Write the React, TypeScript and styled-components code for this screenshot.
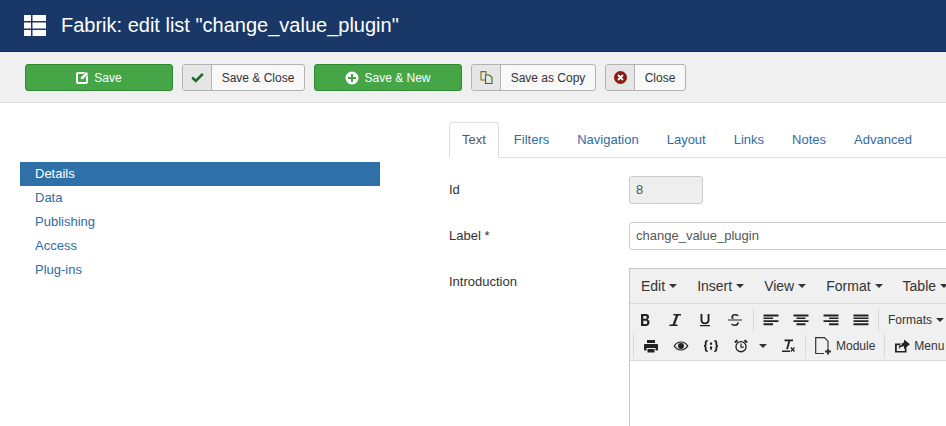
import React from 'react';
import styled, { createGlobalStyle } from 'styled-components';

const GlobalStyle = createGlobalStyle`
  html, body {
    margin: 0;
    height: 426px;
    overflow: hidden;
    background: #ffffff;
  }
  body {
    font-family: 'Liberation Sans', Arial, sans-serif;
    font-size: 13px;
    color: #333333;
  }
  * {
    box-sizing: border-box;
  }
`;

const Page = styled.div`
  width: 946px;
  height: 426px;
  overflow: hidden;
`;

const Header = styled.header`
  display: flex;
  align-items: center;
  gap: 15px;
  height: 52px;
  padding: 0 0 0 24px;
  background: #1a3867;
  border-bottom: 1px solid #0f2a58;
`;

const HeaderTitle = styled.h1`
  margin: 0;
  font-size: 20px;
  font-weight: 400;
  color: #ffffff;
`;

const Toolbar = styled.div`
  display: flex;
  gap: 9px;
  height: 51px;
  padding: 12px 25px 0;
  background: #f0f0f0;
  border-bottom: 1px solid #dddddd;
`;

const GreenButton = styled.button`
  display: flex;
  align-items: center;
  justify-content: center;
  gap: 5px;
  width: 148px;
  height: 27px;
  padding: 0;
  font-family: inherit;
  font-size: 12px;
  color: #ffffff;
  background: #46a546;
  border: 1px solid #2f8a2f;
  border-radius: 3px;
`;

const PlainButton = styled.button`
  display: flex;
  align-items: stretch;
  height: 27px;
  padding: 0;
  font-family: inherit;
  font-size: 12px;
  color: #333333;
  background: #f8f8f8;
  border: 1px solid #b3b3b3;
  border-radius: 3px;
  overflow: hidden;
`;

const ButtonIcon = styled.span`
  display: flex;
  align-items: center;
  justify-content: center;
  width: 29px;
  background: #e6e6e6;
  border-right: 1px solid #b3b3b3;
`;

const ButtonLabel = styled.span<{ $width: number }>`
  display: flex;
  align-items: center;
  justify-content: center;
  width: ${(props) => props.$width}px;
`;

const Content = styled.div`
  display: flex;
  padding: 19px 0 0 20px;
`;

const Sidebar = styled.nav`
  display: flex;
  flex-direction: column;
  width: 360px;
  margin: 40px 69px 0 0;
  flex-shrink: 0;
`;

const SideItem = styled.a<{ $active?: boolean }>`
  height: 24px;
  padding-left: 15px;
  line-height: 23px;
  font-size: 13px;
  color: ${(props) => (props.$active ? '#ffffff' : '#2f6ca8')};
  background: ${(props) => (props.$active ? '#2f70a9' : 'transparent')};
`;

const Main = styled.main`
  flex: 1;
  min-width: 0;
`;

const Tabs = styled.div`
  display: flex;
  height: 36px;
  border-bottom: 1px solid #dddddd;
`;

const Tab = styled.a<{ $active?: boolean }>`
  height: 36px;
  padding: 9px ${(props) => (props.$active ? '12px' : '13px')} 0;
  margin-right: ${(props) => (props.$active ? '1px' : '0')};
  font-size: 13px;
  color: ${(props) => (props.$active ? '#555555' : '#2f6ca8')};
  background: ${(props) => (props.$active ? '#ffffff' : 'transparent')};
  border: 1px solid ${(props) => (props.$active ? '#dddddd' : 'transparent')};
  border-bottom-color: ${(props) => (props.$active ? '#ffffff' : 'transparent')};
  border-radius: 4px 4px 0 0;
`;

const Row = styled.div`
  display: flex;
  margin-top: 18px;
`;

const FieldLabel = styled.label`
  width: 180px;
  flex-shrink: 0;
  padding-top: 6px;
  font-size: 13px;
  color: #333333;
`;

const TextInput = styled.div<{ $readonly?: boolean }>`
  width: ${(props) => (props.$readonly ? '74px' : '340px')};
  height: 28px;
  padding: 0 6px;
  line-height: 26px;
  font-size: 13px;
  color: #555555;
  background: ${(props) => (props.$readonly ? '#eeeeee' : '#ffffff')};
  border: 1px solid #cccccc;
  border-radius: 3px;
  flex-shrink: 0;
`;

const Editor = styled.div`
  width: 340px;
  height: 180px;
  flex-shrink: 0;
  border: 1px solid #c5c5c5;
  background: #ffffff;
`;

const MenuBar = styled.div`
  display: flex;
  align-items: center;
  gap: 20px;
  height: 35px;
  padding-left: 11px;
  background: #f0f0f0;
  border-bottom: 1px solid #d9d9d9;
  white-space: nowrap;
`;

const MenuItem = styled.span`
  display: inline-flex;
  align-items: center;
  gap: 4px;
  font-size: 14px;
  color: #333333;
`;

const Caret = styled.i<{ $margin?: string }>`
  width: 0;
  height: 0;
  margin: ${(props) => props.$margin || '0'};
  border-left: 4px solid transparent;
  border-right: 4px solid transparent;
  border-top: 4px solid #333333;
  flex-shrink: 0;
`;

const IconRows = styled.div`
  display: flex;
  flex-direction: column;
  gap: 2px;
  height: 57px;
  padding-top: 4px;
  background: #f0f0f0;
  border-bottom: 1px solid #d9d9d9;
  overflow: hidden;
`;

const IconRow = styled.div<{ $indent: number }>`
  display: flex;
  align-items: center;
  height: 24px;
  padding-left: ${(props) => props.$indent}px;
  white-space: nowrap;
`;

const ToolIcon = styled.span`
  display: flex;
  align-items: center;
  justify-content: center;
  width: 30px;
  height: 24px;
  flex-shrink: 0;
`;

const ToolSep = styled.span<{ $left?: number; $right?: number }>`
  width: 1px;
  height: 24px;
  margin: 0 ${(props) => props.$right ?? 2}px 0 ${(props) => props.$left ?? 2}px;
  background: #d9d9d9;
  flex-shrink: 0;
`;

const ToolText = styled.span<{ $right?: number }>`
  display: inline-flex;
  align-items: center;
  gap: 4px;
  padding: 0 ${(props) => props.$right ?? 7}px 0 7px;
  font-size: 12px;
  color: #333333;
  flex-shrink: 0;
`;

const Glyph = ({ d, size = 16 }: { d: string; size?: number }) => (
  <svg width={size} height={size} viewBox="0 0 16 16" fill="#222222" fillRule="evenodd">
    <path d={d} />
  </svg>
);

const ICONS: Record<string, string> = {
  bold: 'M4 2h4.800C11 2 12 3.300 12 5c0 1.200-.6 2.100-1.500 2.500 1.200.4 2 1.400 2 2.800 0 2.200-1.500 3.700-3.700 3.700H4V2zm2.300 2v2.800h2c.9 0 1.400-.6 1.400-1.400S9.200 4 8.300 4h-2zm0 4.800V12h2.400c1 0 1.500-.7 1.500-1.600s-.5-1.600-1.500-1.600H6.300z',
  italic: 'M6.500 2H14v1.600h-2.700L8 12.400h2.500V14H2.500v-1.600h3.100l3.300-8.800H6.500V2z',
  underline: 'M3.500 2h1.900v5.800c0 1.700.9 2.700 2.600 2.700s2.600-1 2.600-2.700V2h1.900v5.900c0 2.800-1.800 4.300-4.500 4.300S3.500 10.700 3.500 7.900V2zM3 13h10v1.300H3V13z',
  strike: 'M1 7.500h14v1.100H1V7.500zM4.900 6.700C4.500 6.200 4.300 5.600 4.300 5c0-1.900 1.600-3 3.800-3 1.400 0 2.600.4 3.500 1l-.7 1.300C10.100 3.700 9.200 3.400 8.100 3.400 6.900 3.400 6 4 6 5c0 .7.400 1.200 1.400 1.700H4.900zM11.500 9.400c.2.400.3.800.3 1.300 0 2-1.600 3.300-4 3.300-1.500 0-2.800-.5-3.700-1.200l.8-1.300c.8.600 1.800 1 2.900 1 1.300 0 2.200-.7 2.200-1.700 0-.2 0-.3-.1-.4h1.600z',
  alignLeft: 'M.5 2.500h15v2H.5v-2zm0 3h9.500v1.500H.5V5.500zm0 2.800h15v1.700H.5V8.300zm0 3h9.500v2H.5v-2z',
  alignCenter: 'M.5 2.500h15v2H.5v-2zm3 3h9v1.500h-9V5.500zm-3 2.800h15v1.700H.5V8.300zm3 3h9v2h-9v-2z',
  alignRight: 'M.5 2.500h15v2H.5v-2zm5.500 3h9.500v1.500H6V5.500zM.5 8.300h15v1.700H.5V8.300zm5.500 3h9.500v2H6v-2z',
  justify: 'M.5 2.500h15v2H.5v-2zm0 3h15v1.500H.5V5.500zm0 2.800h15v1.700H.5V8.300zm0 3h15v2H.5v-2z',
  print: 'M4 2h8v3H4V2zM2 6h12c.6 0 1 .4 1 1v4.500c0 .5-.4 1-1 1h-1.500V10h-9v2.500H2c-.6 0-1-.5-1-1V7c0-.6.4-1 1-1zm2.500 5h7v3.500h-7V11z',
  eye: 'M8 3.500c3.300 0 6 1.900 7.500 4.500-1.500 2.600-4.200 4.500-7.500 4.500S2 10.600.5 8C2 5.400 4.700 3.500 8 3.500zm0 1.100C5.400 4.600 3.300 6 2 8c1.300 2 3.400 3.400 6 3.400S12.700 10 14 8c-1.300-2-3.400-3.400-6-3.400zM8 5a3 3 0 1 1 0 6 3 3 0 0 1 0-6z',
  code: 'M4.800 2v1.500c-.9 0-1.200.4-1.200 1.200v1.800c0 .8-.4 1.300-1 1.500.6.200 1 .7 1 1.500v1.800c0 .8.300 1.200 1.200 1.200V14c-2 0-3-.8-3-2.500V9.700c0-.7-.3-1-.8-1V7.300c.5 0 .8-.3.8-1V4.500C1.800 2.800 2.800 2 4.800 2zm6.400 0c2 0 3 .8 3 2.500v1.800c0 .7.300 1 .8 1v1.400c-.5 0-.8.3-.8 1v1.800c0 1.700-1 2.500-3 2.500v-1.500c.9 0 1.200-.4 1.200-1.200V9.500c0-.8.400-1.300 1-1.500-.6-.2-1-.7-1-1.500V4.700c0-.8-.3-1.200-1.200-1.200V2zM6.900 4.500h2.200v2.200H6.900V4.500zm0 4h2.200v1.800c0 1-.5 1.700-1.400 2l-.5-.8c.4-.2.600-.5.600-.8h-.9V8.500z',
  clock: 'M8 3a5.700 5.700 0 1 1 0 11.400A5.700 5.700 0 0 1 8 3zm0 1.300a4.400 4.400 0 1 0 0 8.800 4.400 4.400 0 0 0 0-8.800zM7.400 5.500h1.200v3.100h2.200v1.200H7.400V5.500zM3.700 1.500L5.200 3 2.600 5.200 1.200 3.700zM12.300 1.500l2.500 2.200-1.400 1.500L10.800 3z',
  clear: 'M4.500 1.500H13v1.700h-2.800L8 11.200H6.100l2.200-8H4.500V1.500zM2 12.500h8v1.500H2v-1.500zM11.300 9l1.400 1.500L14.100 9l.9.800-1.400 1.600 1.400 1.600-.9.900-1.400-1.500-1.400 1.500-.9-.9 1.400-1.600-1.400-1.600z',
  menu: 'M1 5.500h7.500L7 7.300H2.800v5.700h8v-2.500l1.700-1.500v5.500H1V5.500zM10 1.500l6 4.700-6 4.800V8.200c-2.500 0-4.200.9-5.300 3 .2-3.700 2.300-6.200 5.300-6.600V1.500z',
};

const SaveIcon = () => (
  <svg width="13" height="13" viewBox="0 0 13 13">
    <rect x="1" y="2" width="10" height="10" rx="1" fill="none" stroke="#ffffff" strokeWidth="2" />
    <path d="M4.500 6.200L10.300.8l2.200 2.200L7 8.500H4.500z" fill="#ffffff" stroke="#46a546" strokeWidth="0.800" />
  </svg>
);

const PlusCircleIcon = () => (
  <svg width="14" height="14" viewBox="0 0 14 14">
    <circle cx="7" cy="7" r="6.500" fill="#ffffff" />
    <path d="M6 3h2v3h3v2H8v3H6V8H3V6h3z" fill="#46a546" />
  </svg>
);

const CheckIcon = () => (
  <svg width="13" height="11" viewBox="0 0 13 11" fill="none">
    <path d="M1.200 5.500L4.800 9 11.800 1.800" stroke="#1f6b2a" strokeWidth="2.600" />
  </svg>
);

const CopyIcon = () => (
  <svg width="13" height="13" viewBox="0 0 13 13" fill="none" strokeWidth="1.100">
    <path d="M1 .6h5v8.400H1z" stroke="#8a6d00" />
    <path d="M5.500 4h4l2.500 2.500v6H5.500z" fill="#e6e6e6" stroke="#1f7a1f" />
  </svg>
);

const CloseIcon = () => (
  <svg width="13" height="13" viewBox="0 0 13 13">
    <circle cx="6.500" cy="6.500" r="6.500" fill="#8f1a14" />
    <path d="M4 4l5 5M9 4l-5 5" stroke="#ffffff" strokeWidth="1.800" />
  </svg>
);

const ListIcon = () => (
  <svg width="22" height="21" viewBox="0 0 22 21" fill="#ffffff">
    <path d="M0 0h7v6H0zM8.500 0H22v6H8.500zM0 7.500h7v6H0zM8.500 7.500H22v6H8.500zM0 15h7v6H0zM8.500 15H22v6H8.500z" />
  </svg>
);

const ModuleIcon = () => (
  <svg width="17" height="18" viewBox="0 0 17 18" fill="none">
    <path d="M9 16.500H.7V.7h8.800l3.500 3.500v6.800" stroke="#333333" strokeWidth="1.200" />
    <path d="M13 11.500v6M10 14.500h6" stroke="#333333" strokeWidth="2" />
  </svg>
);

const menus = ['Edit', 'Insert', 'View', 'Format', 'Table'];

const App: React.FC = () => {
  return (
    <Page>
      <GlobalStyle />
      <Header>
        <ListIcon />
        <HeaderTitle>Fabrik: edit list "change_value_plugin"</HeaderTitle>
      </Header>
      <Toolbar>
        <GreenButton>
          <SaveIcon />
          Save
        </GreenButton>
        <PlainButton>
          <ButtonIcon>
            <CheckIcon />
          </ButtonIcon>
          <ButtonLabel $width={92}>Save &amp; Close</ButtonLabel>
        </PlainButton>
        <GreenButton>
          <PlusCircleIcon />
          Save &amp; New
        </GreenButton>
        <PlainButton>
          <ButtonIcon>
            <CopyIcon />
          </ButtonIcon>
          <ButtonLabel $width={94}>Save as Copy</ButtonLabel>
        </PlainButton>
        <PlainButton>
          <ButtonIcon>
            <CloseIcon />
          </ButtonIcon>
          <ButtonLabel $width={50}>Close</ButtonLabel>
        </PlainButton>
      </Toolbar>
      <Content>
        <Sidebar>
          <SideItem $active>Details</SideItem>
          <SideItem>Data</SideItem>
          <SideItem>Publishing</SideItem>
          <SideItem>Access</SideItem>
          <SideItem>Plug-ins</SideItem>
        </Sidebar>
        <Main>
          <Tabs>
            <Tab $active>Text</Tab>
            <Tab>Filters</Tab>
            <Tab>Navigation</Tab>
            <Tab>Layout</Tab>
            <Tab>Links</Tab>
            <Tab>Notes</Tab>
            <Tab>Advanced</Tab>
          </Tabs>
          <Row>
            <FieldLabel>Id</FieldLabel>
            <TextInput $readonly>8</TextInput>
          </Row>
          <Row>
            <FieldLabel>Label *</FieldLabel>
            <TextInput>change_value_plugin</TextInput>
          </Row>
          <Row>
            <FieldLabel>Introduction</FieldLabel>
            <Editor>
              <MenuBar>
                {menus.map((menu) => (
                  <MenuItem key={menu}>
                    {menu}
                    <Caret />
                  </MenuItem>
                ))}
              </MenuBar>
              <IconRows>
                <IconRow $indent={0}>
                  <ToolIcon><Glyph d={ICONS.bold} /></ToolIcon>
                  <ToolIcon><Glyph d={ICONS.italic} /></ToolIcon>
                  <ToolIcon><Glyph d={ICONS.underline} /></ToolIcon>
                  <ToolIcon><Glyph d={ICONS.strike} /></ToolIcon>
                  <ToolSep $left={3} />
                  <ToolIcon><Glyph d={ICONS.alignLeft} /></ToolIcon>
                  <ToolIcon><Glyph d={ICONS.alignCenter} /></ToolIcon>
                  <ToolIcon><Glyph d={ICONS.alignRight} /></ToolIcon>
                  <ToolIcon><Glyph d={ICONS.justify} /></ToolIcon>
                  <ToolSep />
                  <ToolText>
                    Formats
                    <Caret />
                  </ToolText>
                </IconRow>
                <IconRow $indent={3}>
                  <ToolSep $left={0} $right={2} />
                  <ToolIcon><Glyph d={ICONS.print} /></ToolIcon>
                  <ToolIcon><Glyph d={ICONS.eye} /></ToolIcon>
                  <ToolIcon><Glyph d={ICONS.code} /></ToolIcon>
                  <ToolIcon><Glyph d={ICONS.clock} /></ToolIcon>
                  <Caret $margin="0 6px 0 3px" />
                  <ToolIcon><Glyph d={ICONS.clear} /></ToolIcon>
                  <ToolSep />
                  <ToolText $right={9}>
                    <ModuleIcon />
                    Module
                  </ToolText>
                  <ToolSep $left={0} />
                  <ToolText>
                    <Glyph d={ICONS.menu} />
                    Menu
                  </ToolText>
                </IconRow>
              </IconRows>
            </Editor>
          </Row>
        </Main>
      </Content>
    </Page>
  );
};

export default App;
